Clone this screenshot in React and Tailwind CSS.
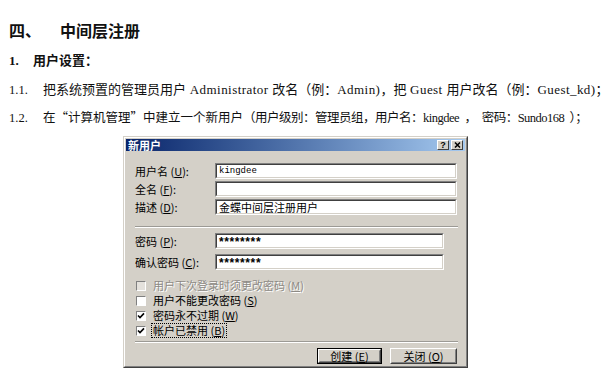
import React from 'react';

const doc = "font-['Liberation_Serif','Noto_Sans_CJK_SC',serif]";
const ui = "font-['Noto_Sans_CJK_SC','Liberation_Sans',sans-serif]";

// Latin words in the document lines are a little wider than Times
const L = ({ children }) => <span className="tracking-[0.45px]">{children}</span>;
const Q = ({ children }) => <span className="font-['Noto_Sans_CJK_SC',sans-serif]">{children}</span>;

const Field = ({ label, k, value, width, mono, stars }) => (
  <div className="flex items-center h-[16px]">
    <div className="w-[80px] text-[11px] leading-[16px] whitespace-nowrap">
      {label} (<u>{k}</u>):
    </div>
    <div
      className="h-[16px] border border-t-[#808080] border-l-[#808080] border-b-white border-r-white"
      style={{ width }}
    >
      {stars ? (
        <div className="h-full bg-white border border-t-[#404040] border-l-[#404040] border-b-[#d4d0c8] border-r-[#d4d0c8] flex items-start pt-[2px] pl-[2px]">
          <span className="font-['Liberation_Sans',sans-serif] font-bold text-[12px] leading-[11px] tracking-[0.6px]">
            {value}
          </span>
        </div>
      ) : (
        <div className="h-full bg-white border border-t-[#404040] border-l-[#404040] border-b-[#d4d0c8] border-r-[#d4d0c8] flex items-center pl-[2px] overflow-hidden">
          <span
            className={
              mono
                ? "font-['Liberation_Mono',monospace] text-[9px] leading-[12px]"
                : 'text-[11px] leading-[12px]'
            }
          >
            {value}
          </span>
        </div>
      )}
    </div>
  </div>
);

const Check = ({ checked, disabled, focus, children }) => (
  <div className="flex items-center h-[15px]">
    <div
      className={
        'w-[10px] h-[10px] ml-[1px] flex items-center justify-center border border-t-[#808080] border-l-[#808080] border-b-white border-r-white ' +
        (disabled ? 'bg-[#e4e1dc]' : 'bg-white')
      }
    >
      {checked && (
        <svg width="8" height="8" viewBox="0 0 8 8">
          <polyline points="1,3.5 3,5.6 7,1.4" fill="none" stroke="#000" strokeWidth="1.6" />
        </svg>
      )}
    </div>
    <span
      className={
        'ml-[5px] text-[11px] leading-[13px] px-[1px] ' +
        (disabled ? 'text-[#8d8a85] [text-shadow:1px_1px_0_#fff]' : 'text-black') +
        (focus ? ' border border-dotted border-black' : ' border border-transparent')
      }
    >
      {children}
    </span>
  </div>
);

const Button = ({ children, w, isDefault }) => (
  <div className={'h-[16px] ' + (isDefault ? 'border border-black' : '')} style={{ width: w }}>
    <div className="h-full border border-t-white border-l-white border-b-[#404040] border-r-[#404040]">
      <div className="h-full border border-t-[#d4d0c8] border-l-[#d4d0c8] border-b-[#808080] border-r-[#808080] flex items-center justify-center text-[11px] leading-[12px]">
        {children}
      </div>
    </div>
  </div>
);

const Sep = () => (
  <div className="w-[323px]">
    <div className="h-[1px] bg-[#9c9a95]" />
    <div className="h-[1px] bg-white" />
  </div>
);

export default function App() {
  return (
    <div className="w-[609px] h-[378px] bg-white overflow-hidden text-[#111]">
      <div className="pt-[20px] pl-[9px] w-[609px]">
        <div className="h-[20px] w-[400px] flex items-center text-[16px] font-bold font-['Noto_Sans_CJK_SC',sans-serif]">
          <span className="w-[51px] shrink-0">四、</span>
          <span className="shrink-0">中间层注册</span>
        </div>
        <div className={'mt-[11px] h-[20px] w-[400px] flex items-center text-[13px] font-bold ' + doc}>
          <span className="w-[24px] shrink-0">1.</span>
          <span className="shrink-0">用户设置：</span>
        </div>
        <div className={'mt-[9px] h-[20px] flex items-center text-[13px] whitespace-nowrap ' + doc}>
          <span className="w-[34px] shrink-0 text-[12.5px]">1.1.</span>
          <span className="shrink-0">
            把系统预置的管理员用户<L> Administrator </L>改名（例：<L>Admin)</L>，把<L> Guest </L>用户改名（例：<L>Guest_kd)</L>；
          </span>
        </div>
        <div className={'mt-[8px] h-[20px] flex items-center text-[12.5px] whitespace-pre ' + doc}>
          <span className="w-[34px] shrink-0">1.2.</span>
          <span className="shrink-0">
            在<Q>“</Q>计算机管理<Q>”</Q>中建立一个新用户
            <span className="tracking-[-0.5px]">（用户级别：管理员组，用户名：kingdee  ，  密码：Sundo168  ）；</span>
          </span>
        </div>
      </div>

      <div
        className={
          'mt-[8px] ml-[123px] w-[345px] h-[232px] border border-t-[#d4d0c8] border-l-[#d4d0c8] border-b-[#404040] border-r-[#404040] text-black ' +
          ui
        }
      >
        <div className="h-full border border-t-white border-l-white border-b-[#808080] border-r-[#808080] bg-[#d4d0c8] p-[1px] flex flex-col">
          <div className="h-[12px] flex items-center justify-between bg-linear-to-r from-[#0a246a] to-[#a6caf0] pl-[2px] pr-[2px]">
            <span className="text-white font-bold text-[11px] leading-[12px]">新用户</span>
            <div className="flex gap-[2px]">
              <div className="w-[12px] h-[10px] bg-[#d4d0c8] border border-t-white border-l-white border-b-[#404040] border-r-[#404040] flex items-center justify-center">
                <span className="font-['Liberation_Sans',sans-serif] font-bold text-[9px] leading-[8px]">?</span>
              </div>
              <div className="w-[12px] h-[10px] bg-[#d4d0c8] border border-t-white border-l-white border-b-[#404040] border-r-[#404040] flex items-center justify-center">
                <svg width="7" height="6" viewBox="0 0 7 6">
                  <path d="M1 0.5 L6 5.5 M6 0.5 L1 5.5" stroke="#000" strokeWidth="1.5" />
                </svg>
              </div>
            </div>
          </div>

          <div className="pl-[9px] pt-[12px] flex flex-col">
            <div className="flex flex-col gap-[2px]">
              <Field label="用户名" k="U" value="kingdee" width={242} mono />
              <Field label="全名" k="F" value="" width={242} />
              <Field label="描述" k="D" value="金蝶中间层注册用户" width={242} />
            </div>
            <div className="mt-[11px]">
              <Sep />
            </div>
            <div className="mt-[5px] flex flex-col gap-[5px]">
              <Field label="密码" k="P" value="********" width={229} stars />
              <Field label="确认密码" k="C" value="********" width={229} stars />
            </div>
            <div className="mt-[8px] flex flex-col">
              <Check disabled>用户下次登录时须更改密码 (<u>M</u>)</Check>
              <Check>用户不能更改密码 (<u>S</u>)</Check>
              <Check checked>密码永不过期 (<u>W</u>)</Check>
              <Check checked focus>帐户已禁用 (<u>B</u>)</Check>
            </div>
            <div className="mt-[3px]">
              <Sep />
            </div>
            <div className="mt-[5px] w-[323px] pr-[1px] flex justify-end gap-[8px]">
              <Button w={65} isDefault>创建 (<u>E</u>)</Button>
              <Button w={67}>关闭 (<u>O</u>)</Button>
            </div>
          </div>
        </div>
      </div>
    </div>
  );
}
